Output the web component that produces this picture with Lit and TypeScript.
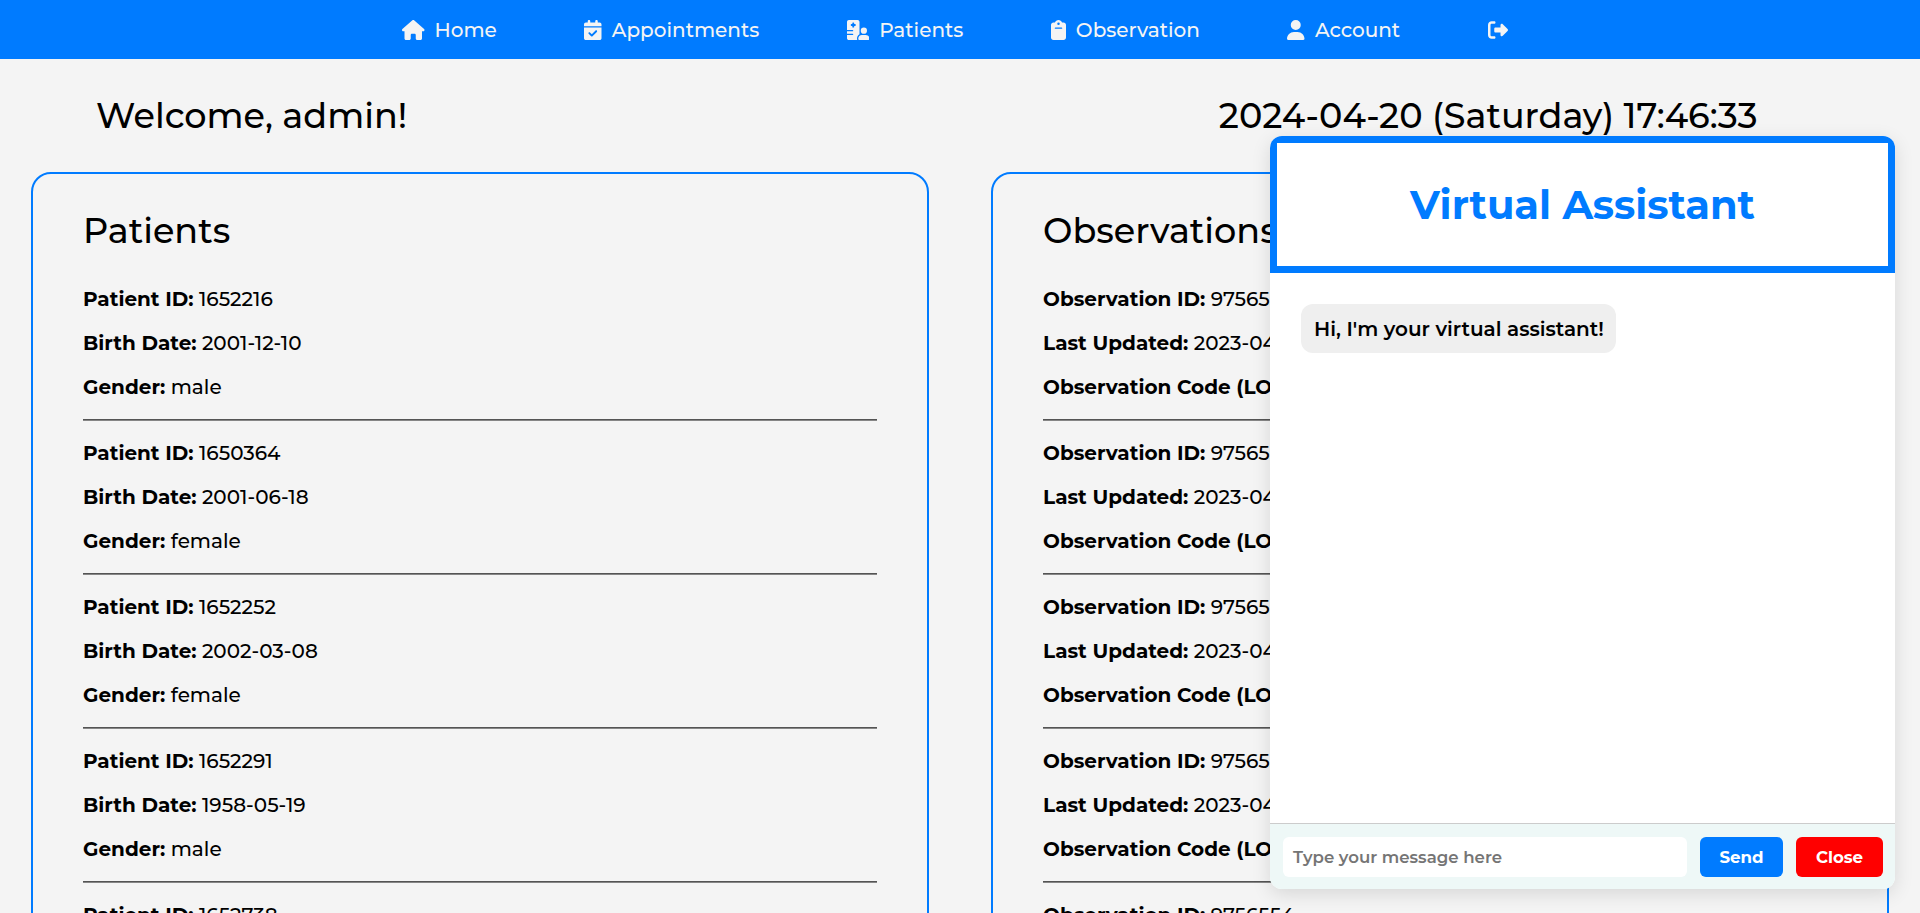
import { LitElement, html, css, svg } from "lit";
import { customElement } from "lit/decorators.js";

const icons = {
  home: [576, "M575.8 255.5c0 18-15 32.1-32 32.1h-32l.7 160.2c0 2.7-.2 5.4-.5 8.1V472c0 22.1-17.9 40-40 40H456c-1.1 0-2.2 0-3.3-.1c-1.4 .1-2.8 .1-4.2 .1H416 392c-22.1 0-40-17.9-40-40V448 384c0-17.7-14.3-32-32-32H256c-17.7 0-32 14.3-32 32v64 24c0 22.1-17.9 40-40 40H160 128.1c-1.5 0-3-.1-4.5-.2c-1.2 .1-2.4 .2-3.6 .2H104c-22.1 0-40-17.9-40-40V360c0-.9 0-1.9 .1-2.8V287.6H32c-18 0-32-14-32-32.1c0-9 3-17 10-24L266.4 8c7-7 15-8 22-8s15 2 21 7L564.8 231.5c8 7 12 15 11 24z"],
  calendar: [448, "M128 0c17.7 0 32 14.3 32 32V64H288V32c0-17.7 14.3-32 32-32s32 14.3 32 32V64h48c26.5 0 48 21.5 48 48v48H0V112C0 85.5 21.5 64 48 64H96V32c0-17.7 14.3-32 32-32zM0 192H448V464c0 26.5-21.5 48-48 48H48c-26.5 0-48-21.5-48-48V192zM329 305c9.4-9.4 9.4-24.6 0-33.9s-24.6-9.4-33.9 0l-95 95-47-47c-9.4-9.4-24.6-9.4-33.9 0s-9.4 24.6 0 33.9l64 64c9.4 9.4 24.6 9.4 33.9 0L329 305z"],
  hospitalUser: [576, "M48 0C21.5 0 0 21.5 0 48V256H144c8.8 0 16 7.2 16 16s-7.2 16-16 16H0v64H144c8.8 0 16 7.2 16 16s-7.2 16-16 16H0v80c0 26.5 21.5 48 48 48H265.9c-6.3-10.2-9.9-22.2-9.9-35.1c0-46.9 25.8-87.8 64-109.2V271.8 48c0-26.5-21.5-48-48-48H48zM152 64h16c8.8 0 16 7.2 16 16v24h24c8.8 0 16 7.2 16 16v16c0 8.8-7.2 16-16 16H184v24c0 8.8-7.2 16-16 16H152c-8.8 0-16-7.2-16-16V152H112c-8.8 0-16-7.2-16-16V120c0-8.8 7.2-16 16-16h24V80c0-8.8 7.2-16 16-16zM512 272a80 80 0 1 0 -160 0 80 80 0 1 0 160 0zM288 477.1c0 19.3 15.6 34.9 34.9 34.9H541.1c19.3 0 34.9-15.6 34.9-34.9c0-51.4-41.7-93.1-93.1-93.1H381.1c-51.4 0-93.1 41.7-93.1 93.1z"],
  clipboard: [384, "M192 0c-41.8 0-77.4 26.7-90.5 64H64C28.7 64 0 92.7 0 128V448c0 35.3 28.7 64 64 64H320c35.3 0 64-28.7 64-64V128c0-35.3-28.7-64-64-64H282.5C269.4 26.7 233.8 0 192 0zm0 64a32 32 0 1 1 0 64 32 32 0 1 1 0-64zM112 192H272c8.8 0 16 7.2 16 16s-7.2 16-16 16H112c-8.8 0-16-7.2-16-16s7.2-16 16-16z"],
  user: [448, "M224 256A128 128 0 1 0 224 0a128 128 0 1 0 0 256zm-45.7 48C79.8 304 0 383.8 0 482.3C0 498.7 13.3 512 29.7 512H418.3c16.4 0 29.7-13.3 29.7-29.7C448 383.8 368.2 304 269.7 304H178.3z"],
  logout: [512, "M377.9 105.9L500.7 228.7c7.2 7.2 11.3 17.1 11.3 27.3s-4.1 20.1-11.3 27.3L377.9 406.1c-6.4 6.4-15 9.9-24 9.9c-18.7 0-33.9-15.2-33.9-33.9l0-62.1-128 0c-17.7 0-32-14.3-32-32l0-64c0-17.7 14.3-32 32-32l128 0 0-62.1c0-18.7 15.2-33.9 33.9-33.9c9 0 17.6 3.6 24 9.9zM160 96L96 96c-17.7 0-32 14.3-32 32l0 256c0 17.7 14.3 32 32 32l64 0c17.7 0 32 14.3 32 32s-14.3 32-32 32l-64 0c-53 0-96-43-96-96L0 128C0 75 43 32 96 32l64 0c17.7 0 32 14.3 32 32s-14.3 32-32 32z"],
} as const;

type IconName = keyof typeof icons;
type Field = [label: string, value: string];

const nav: [IconName, string][] = [
  ["home", "Home"],
  ["calendar", "Appointments"],
  ["hospitalUser", "Patients"],
  ["clipboard", "Observation"],
  ["user", "Account"],
  ["logout", ""],
];

const patient = (id: string, birth: string, gender: string): Field[] => [
  ["Patient ID:", id],
  ["Birth Date:", birth],
  ["Gender:", gender],
];

const patients: Field[][] = [
  patient("1652216", "2001-12-10", "male"),
  patient("1650364", "2001-06-18", "female"),
  patient("1652252", "2002-03-08", "female"),
  patient("1652291", "1958-05-19", "male"),
  patient("1652738", "1971-08-23", "female"),
];

const observations: Field[][] = ["9756550", "9756551", "9756552", "9756553", "9756554"].map((id) => [
  ["Observation ID:", id],
  ["Last Updated:", "2023-04-20"],
  ["Observation Code (LOINC):", "8302-2"],
]);

@customElement("app-root")
class AppRoot extends LitElement {
  static styles = css`
    :host {
      display: block;
      position: relative;
      height: 913px;
      overflow: hidden;
      background: #f4f4f4;
      color: #000;
      font-family: Montserrat, Inter, "Open Sans", sans-serif;
      font-size: 20px;
      font-weight: 500;
      line-height: 24px;
    }
    * { box-sizing: border-box; }
    .nav {
      display: flex;
      align-items: center;
      gap: 87.5px;
      height: 59px;
      padding-left: 402px;
      background: #007bff;
      color: #f4f4f4;
      white-space: nowrap;
    }
    .nav-item { display: flex; align-items: center; gap: 10px; }
    .icon { display: block; height: 20px; fill: currentColor; }
    .greeting {
      display: flex;
      justify-content: space-between;
      padding: 35px 162.5px 35px 96px;
    }
    .big { font-size: 35px; line-height: 43px; }
    .columns {
      display: grid;
      grid-template-columns: 898px 898px;
      gap: 62px;
      padding-left: 31px;
    }
    .card {
      border: 2px solid #007bff;
      border-radius: 20px;
      padding: 35px 50px;
      height: 1000px;
    }
    .card .big { margin-bottom: 35px; }
    .field { margin-bottom: 20px; }
    .label { font-weight: 700; }
    .rule {
      height: 2px;
      margin-bottom: 20px;
      border-top: 1px solid #545454;
      border-bottom: 1px solid #868686;
    }
    .chat {
      position: absolute;
      right: 25px;
      bottom: 24px;
      display: flex;
      flex-direction: column;
      width: 625px;
      height: 753px;
      border-radius: 12px;
      overflow: hidden;
      background: #fff;
      box-shadow: 0 5px 19px rgba(0, 0, 0, 0.12);
    }
    .chat-title {
      display: flex;
      align-items: center;
      justify-content: center;
      height: 137px;
      border: 7px solid #007bff;
      color: #007bff;
      font-size: 40px;
      font-weight: 700;
      line-height: 49px;
    }
    .messages { flex: 1; padding: 31px; }
    .bubble {
      display: flex;
      align-items: center;
      width: 315px;
      height: 49px;
      padding-left: 13px;
      border-radius: 12px;
      background: #efefef;
      font-weight: 600;
      white-space: nowrap;
    }
    .composer {
      display: flex;
      gap: 13px;
      padding: 13px 12px 12px 13px;
      border-top: 1px solid #ccc;
      background: #eef8f7;
      font-size: 16.6px;
      font-weight: 600;
    }
    .input, .button {
      display: flex;
      align-items: center;
      height: 40px;
      border-radius: 6px;
    }
    .input { flex: 1; padding-left: 10px; background: #fff; color: #757575; }
    .button { justify-content: center; color: #fff; font-weight: 700; }
    .send { width: 83px; background: #007bff; }
    .close { width: 87px; background: #f00; }
  `;

  private icon(name: IconName) {
    const [w, d] = icons[name];
    return html`<svg class="icon" viewBox="0 0 ${w} 512" width=${(w * 20) / 512}>${svg`<path d=${d} />`}</svg>`;
  }

  private card(title: string, records: Field[][]) {
    return html`<section class="card">
      <div class="big">${title}</div>
      ${records.map(
        (fields) => html`
          ${fields.map(
            ([label, value]) => html`<div class="field"><span class="label">${label}</span> ${value}</div>`,
          )}
          <div class="rule"></div>
        `,
      )}
    </section>`;
  }

  render() {
    return html`
      <nav class="nav">
        ${nav.map(
          ([name, text]) => html`<a class="nav-item">${this.icon(name)}${text ? html`<span>${text}</span>` : ""}</a>`,
        )}
      </nav>
      <header class="greeting">
        <div class="big">Welcome, admin!</div>
        <div class="big">2024-04-20 (Saturday) 17:46:33</div>
      </header>
      <main class="columns">
        ${this.card("Patients", patients)} ${this.card("Observations", observations)}
      </main>
      <aside class="chat">
        <div class="chat-title">Virtual Assistant</div>
        <div class="messages">
          <div class="bubble">Hi, I'm your virtual assistant!</div>
        </div>
        <div class="composer">
          <div class="input">Type your message here</div>
          <div class="button send">Send</div>
          <div class="button close">Close</div>
        </div>
      </aside>
    `;
  }
}
